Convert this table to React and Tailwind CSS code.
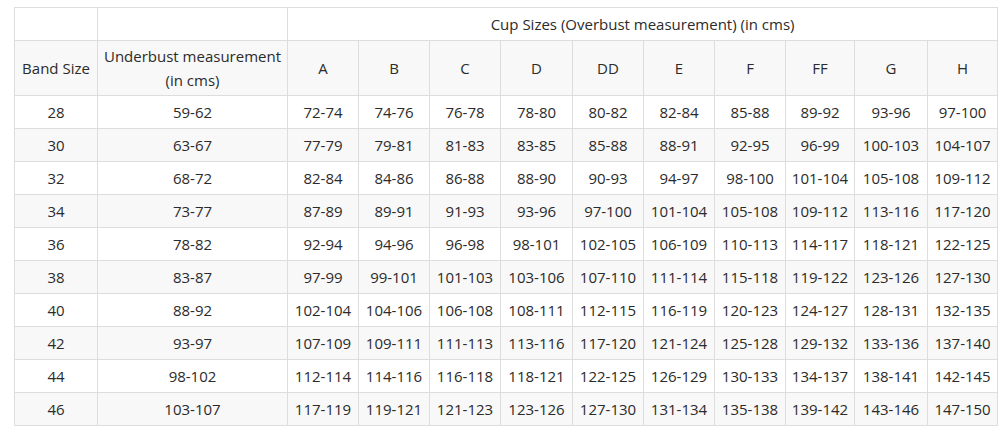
const cups = ['A', 'B', 'C', 'D', 'DD', 'E', 'F', 'FF', 'G', 'H'];
const cupWidths = [71, 71, 71, 72, 71, 71, 71, 69, 73, 70];

const rows = [
  ['28', '59-62', '72-74', '74-76', '76-78', '78-80', '80-82', '82-84', '85-88', '89-92', '93-96', '97-100'],
  ['30', '63-67', '77-79', '79-81', '81-83', '83-85', '85-88', '88-91', '92-95', '96-99', '100-103', '104-107'],
  ['32', '68-72', '82-84', '84-86', '86-88', '88-90', '90-93', '94-97', '98-100', '101-104', '105-108', '109-112'],
  ['34', '73-77', '87-89', '89-91', '91-93', '93-96', '97-100', '101-104', '105-108', '109-112', '113-116', '117-120'],
  ['36', '78-82', '92-94', '94-96', '96-98', '98-101', '102-105', '106-109', '110-113', '114-117', '118-121', '122-125'],
  ['38', '83-87', '97-99', '99-101', '101-103', '103-106', '107-110', '111-114', '115-118', '119-122', '123-126', '127-130'],
  ['40', '88-92', '102-104', '104-106', '106-108', '108-111', '112-115', '116-119', '120-123', '124-127', '128-131', '132-135'],
  ['42', '93-97', '107-109', '109-111', '111-113', '113-116', '117-120', '121-124', '125-128', '129-132', '133-136', '137-140'],
  ['44', '98-102', '112-114', '114-116', '116-118', '118-121', '122-125', '126-129', '130-133', '134-137', '138-141', '142-145'],
  ['46', '103-107', '117-119', '119-121', '121-123', '123-126', '127-130', '131-134', '135-138', '139-142', '143-146', '147-150'],
];

const cell = 'border border-[#dddddd] text-center align-middle p-0';

export default function App() {
  return (
    <div className="min-h-[433px] bg-white pl-[14px] pt-[7px] text-[15px] text-[#2b2b2b] font-['Open_Sans',sans-serif]">
      <table className="table-fixed border-collapse w-[983px]">
        <colgroup>
          <col className="w-[83px]" />
          <col className="w-[190px]" />
          {cupWidths.map((w, i) => (
            <col key={i} style={{ width: w }} />
          ))}
        </colgroup>
        <thead>
          {/* Top header row */}
          <tr className="h-[33px] bg-white">
            <th className={`${cell} font-normal`}></th>
            <th className={`${cell} font-normal`}></th>
            <th colSpan={10} className={`${cell} font-normal`}>
              Cup Sizes (Overbust measurement) (in cms)
            </th>
          </tr>
          <tr className="h-[55px] bg-[#f8f8f8]">
            <th className={`${cell} font-normal`}>Band Size</th>
            <th className={`${cell} font-normal leading-[24px]`}>
              Underbust measurement
              <br />
              (in cms)
            </th>
            {cups.map((c) => (
              <th key={c} className={`${cell} font-normal`}>{c}</th>
            ))}
          </tr>
        </thead>
        <tbody>
          {rows.map((r, i) => (
            <tr key={r[0]} className={`h-[33px] ${i % 2 === 0 ? 'bg-white' : 'bg-[#f8f8f8]'}`}>
              {r.map((v, j) => (
                <td key={j} className={cell}>{v}</td>
              ))}
            </tr>
          ))}
        </tbody>
      </table>
    </div>
  );
}
